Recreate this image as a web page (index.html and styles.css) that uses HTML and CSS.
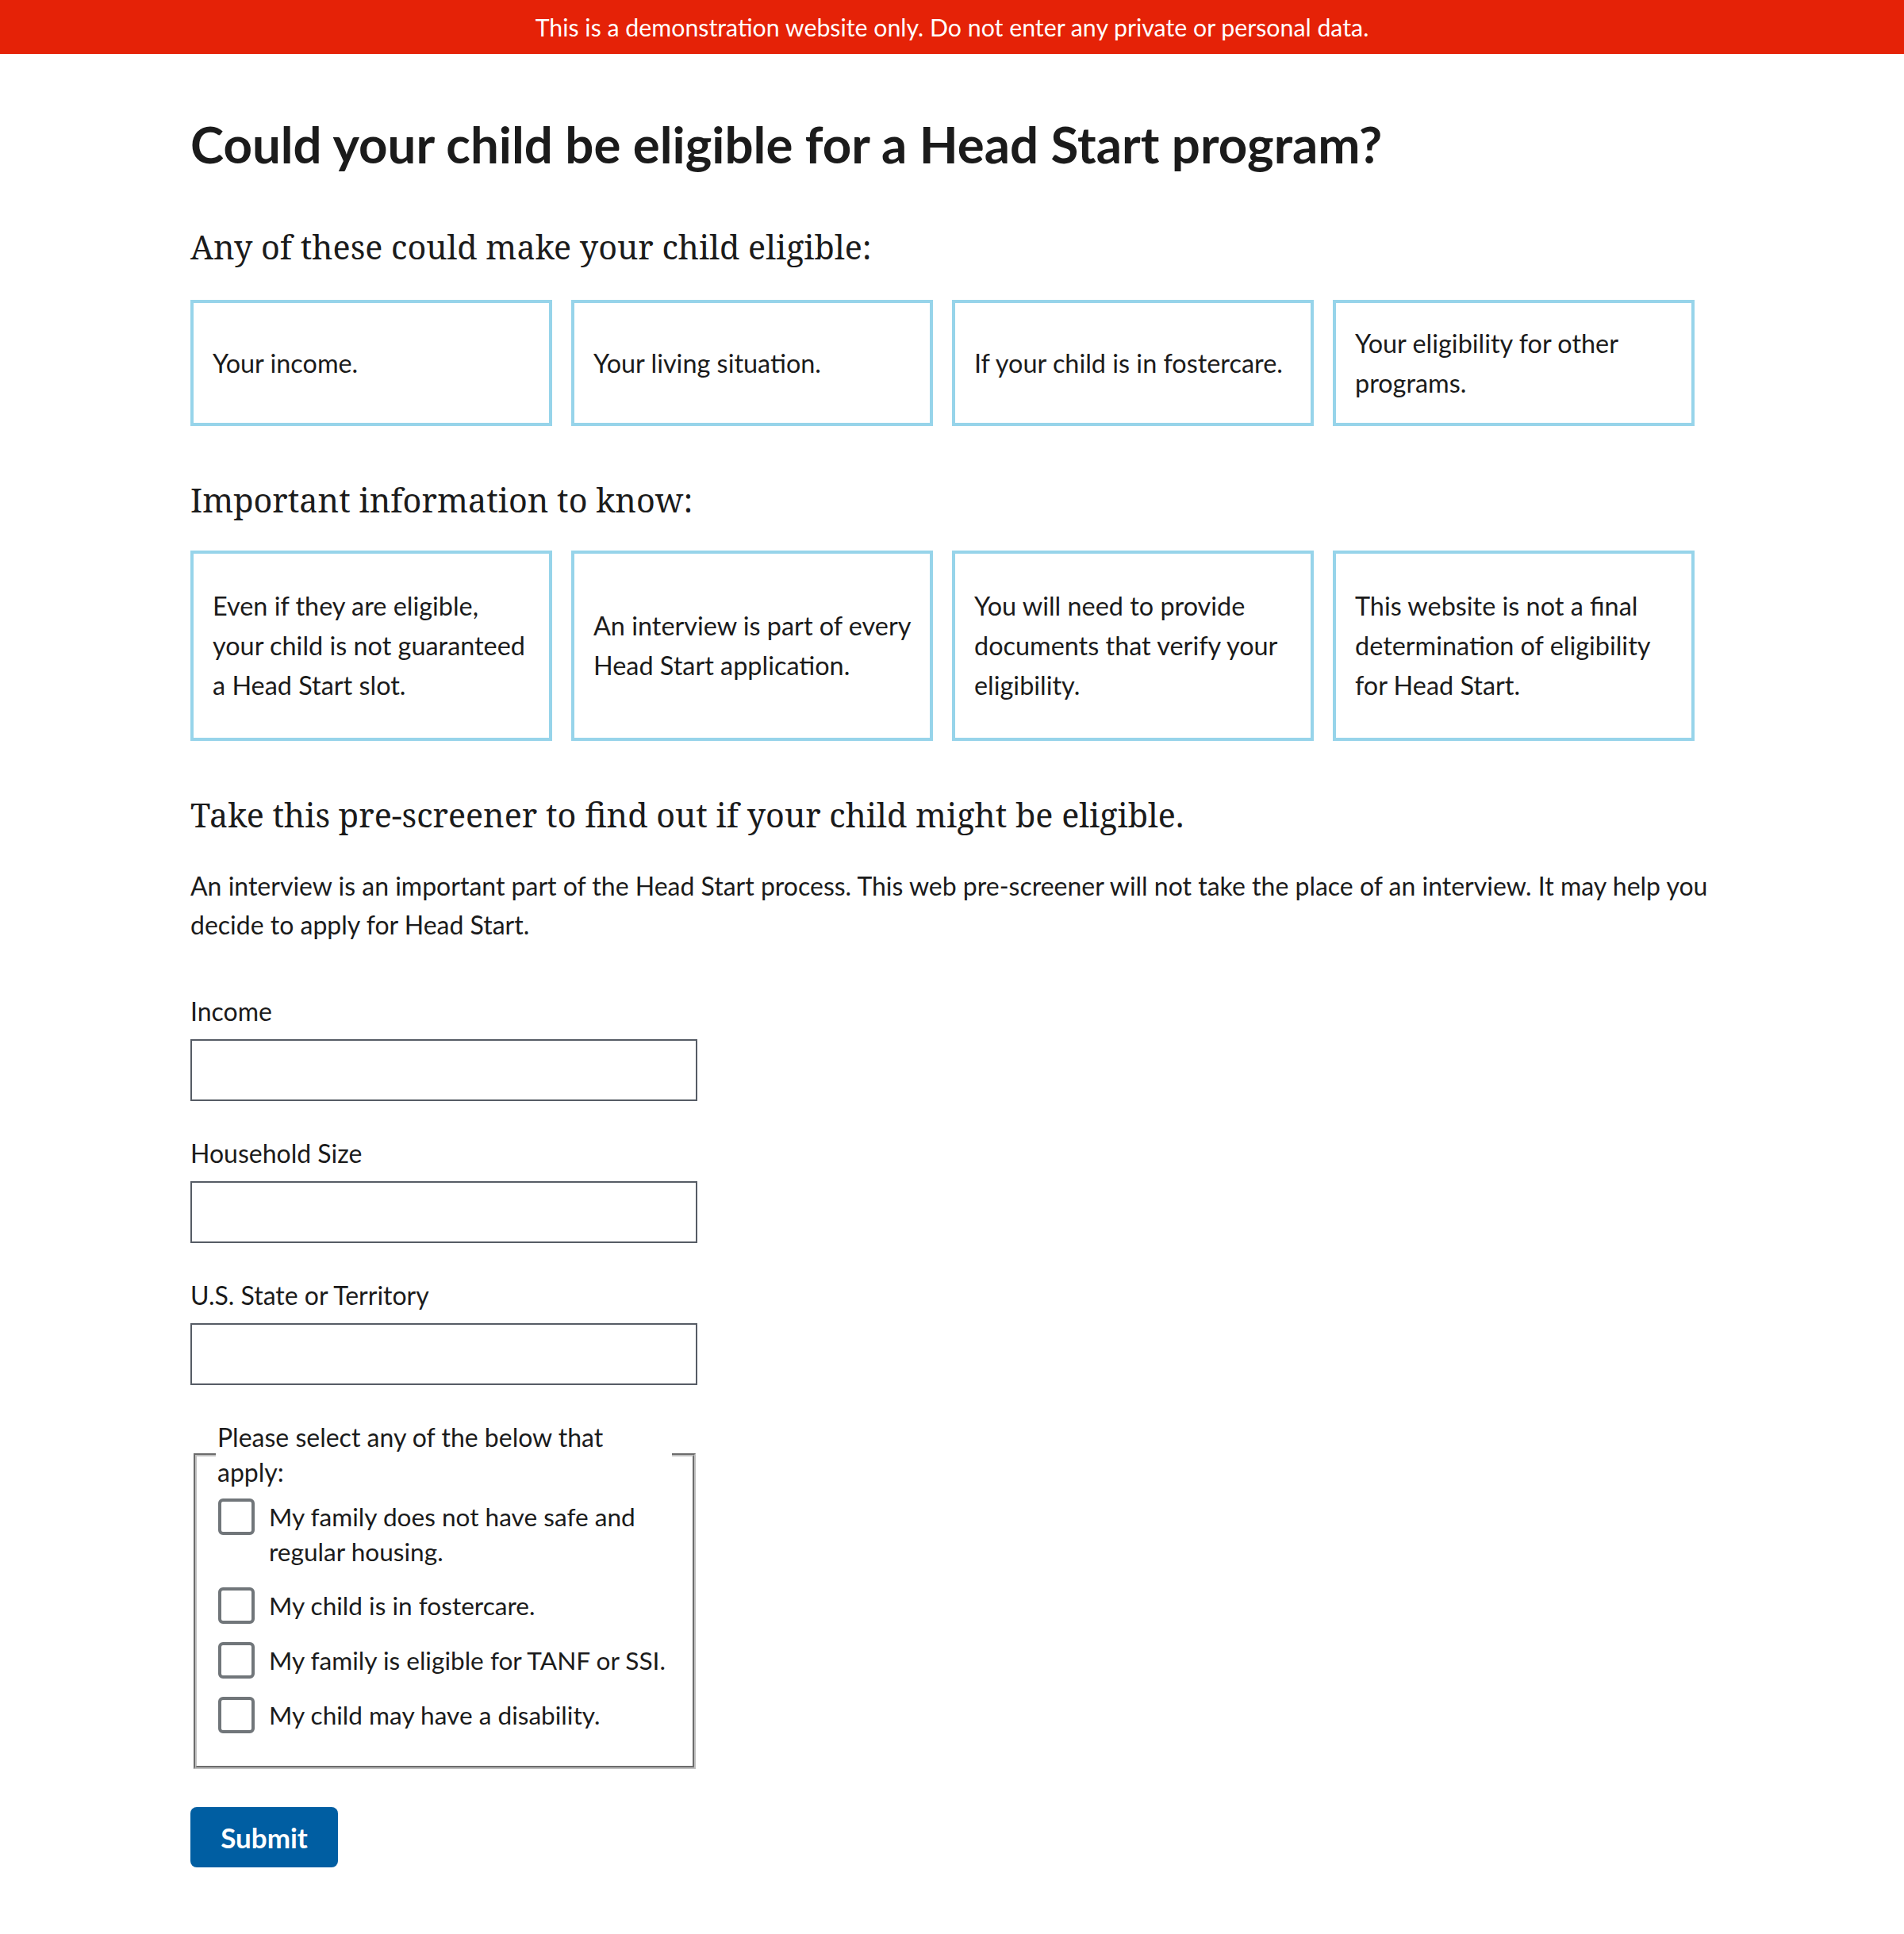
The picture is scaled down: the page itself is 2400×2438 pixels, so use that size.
FILE: index.html
```html
<!DOCTYPE html>
<html lang="en">
<head>
<meta charset="utf-8">
<title>Head Start Pre-screener</title>
<link rel="stylesheet" href="styles.css">
</head>
<body>
<div class="demo-banner">This is a demonstration website only. Do not enter any private or personal data.</div>
<main class="page">
  <h1 class="page-title">Could your child be eligible for a Head Start program?</h1>

  <h2 class="section-title">Any of these could make your child eligible:</h2>
  <div class="card-row card-row--short">
    <div class="card"><p>Your income.</p></div>
    <div class="card"><p>Your living situation.</p></div>
    <div class="card"><p>If your child is in fostercare.</p></div>
    <div class="card"><p>Your eligibility for other programs.</p></div>
  </div>

  <h2 class="section-title section-title--tight">Important information to know:</h2>
  <div class="card-row card-row--tall">
    <div class="card"><p>Even if they are eligible, your child is not guaranteed a Head Start slot.</p></div>
    <div class="card"><p>An interview is part of every Head Start application.</p></div>
    <div class="card"><p>You will need to provide documents that verify your eligibility.</p></div>
    <div class="card"><p>This website is not a final determination of eligibility for Head Start.</p></div>
  </div>

  <h2 class="section-title">Take this pre-screener to find out if your child might be eligible.</h2>
  <p class="intro">An interview is an important part of the Head Start process. This web pre-screener will not take the place of an interview. It may help you decide to apply for Head Start.</p>

  <form class="form">
    <label class="field-label" for="income">Income</label>
    <input class="field-input" id="income" type="text">

    <label class="field-label" for="household">Household Size</label>
    <input class="field-input" id="household" type="text">

    <label class="field-label" for="state">U.S. State or Territory</label>
    <input class="field-input" id="state" type="text">

    <fieldset class="options">
      <legend class="options-legend"><span class="legend-text">Please select any of the below that apply:</span></legend>
      <label class="option"><input type="checkbox" class="option-box"><span class="option-text">My family does not have safe and regular housing.</span></label>
      <label class="option"><input type="checkbox" class="option-box"><span class="option-text">My child is in fostercare.</span></label>
      <label class="option"><input type="checkbox" class="option-box"><span class="option-text">My family is eligible for TANF or SSI.</span></label>
      <label class="option"><input type="checkbox" class="option-box"><span class="option-text">My child may have a disability.</span></label>
    </fieldset>

    <button type="submit" class="submit-btn">Submit</button>
  </form>
</main>
</body>
</html>
```
FILE: styles.css
```css
* { box-sizing: border-box; }

html, body {
  margin: 0;
  padding: 0;
  background: #ffffff;
}

body {
  font-family: Lato, "Noto Sans", "Liberation Sans", sans-serif;
  color: #1b1b1b;
}

.demo-banner {
  height: 68px;
  background: #e52207;
  color: #ffffff;
  font-size: 30.3px;
  display: flex;
  align-items: center;
  justify-content: center;
}

.page {
  padding: 0 0 80px 240px;
  width: 2180px;
}

.page-title {
  margin: 76px 0 0;
  font-size: 63.6px;
  font-weight: 700;
  line-height: 76px;
}

.section-title {
  margin: 68px 0 42px;
  font-family: "Noto Serif", "DejaVu Serif", serif;
  font-weight: 400;
  font-size: 41.3px;
  line-height: 50px;
}

.page-title + .section-title { margin-top: 66px; }

.section-title--tight { margin-bottom: 39px; }

.card-row {
  display: grid;
  grid-template-columns: repeat(4, 456px);
  column-gap: 24px;
}

.card {
  border: 4px solid #97d4ea;
  padding: 0 22px 0 24px;
  display: flex;
  align-items: center;
}

.card-row--short .card { height: 159px; }
.card-row--tall .card { height: 240px; }

.card p {
  margin: 0;
  font-size: 32.4px;
  line-height: 50px;
}

.intro {
  margin: -2px 0 0;
  font-size: 32px;
  line-height: 49px;
  width: 1930px;
}

.form {
  display: flex;
  flex-direction: column;
  align-items: flex-start;
}

.field-label {
  display: block;
  margin-top: 47px;
  font-size: 32px;
  line-height: 38px;
}

.intro + .form .field-label:first-child { margin-top: 66px; }

.field-input {
  display: block;
  margin: 16px 0 0;
  width: 639px;
  height: 78px;
  border: 2px solid #565c65;
  border-radius: 0;
  background: #ffffff;
  font: inherit;
  padding: 0 16px;
}

.options {
  margin: 44px 0 0 4px;
  width: 633px;
  padding: 0 26px 41px 24px;
  border: 4px groove #c0c0c0;
  display: flex;
  flex-direction: column;
  align-items: stretch;
}

.options-legend {
  width: 100%;
  padding: 0 2px;
  font-size: 32px;
  line-height: 44px;
}

.legend-text {
  display: block;
  max-width: 520px;
}

.option {
  display: flex;
  align-items: flex-start;
  margin-top: 24px;
  font-size: 31.6px;
  line-height: 44px;
}

.options-legend + .option { margin-top: 12px; }

.option-box {
  appearance: none;
  -webkit-appearance: none;
  flex: none;
  width: 46px;
  height: 46px;
  margin: -1px 18px 0 3px;
  border: 4px solid #71767a;
  border-radius: 6px;
  background: #ffffff;
}

.option-text { display: block; }

.submit-btn {
  margin-top: 48px;
  width: 186px;
  height: 76px;
  border: 0;
  border-radius: 8px;
  background: #005ea2;
  color: #ffffff;
  font-family: Lato, "Noto Sans", sans-serif;
  font-weight: 700;
  font-size: 35px;
  padding: 0;
}
```
